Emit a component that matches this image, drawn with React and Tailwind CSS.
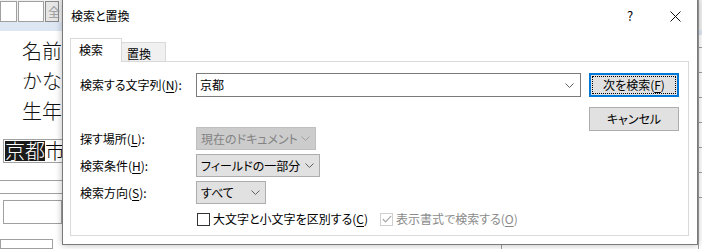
import React from "react";

const font = { fontFamily: '"Noto Sans CJK JP", "Noto Sans", sans-serif' };

function U({ children }) {
  return <span className="underline underline-offset-2">{children}</span>;
}

function Chevron({ color = "#606060" }) {
  return (
    <svg width="9" height="5" viewBox="0 0 9 5" className="shrink-0">
      <polyline points="0.5,0.5 4.5,4.5 8.5,0.5" fill="none" stroke={color} strokeWidth="1" />
    </svg>
  );
}

function Select({ w, text, disabled }) {
  return (
    <div
      className={`flex h-[23px] items-center justify-between whitespace-nowrap border pl-[4px] pr-[5px] ${
        disabled ? "border-[#bfbfbf] bg-[#cccccc] text-[#838383]" : "border-[#adadad] bg-[#e1e1e1] text-black"
      }`}
      style={{ width: w }}
    >
      <span className="leading-none">{text}</span>
      <Chevron color={disabled ? "#a0a0a0" : "#606060"} />
    </div>
  );
}

function Row({ label, children, className = "" }) {
  return (
    <div className={`flex items-center ${className}`}>
      <div className="w-[116px] shrink-0 whitespace-nowrap leading-none">{label}</div>
      {children}
    </div>
  );
}

export default function App() {
  return (
    <div className="relative h-[249px] w-[702px] overflow-hidden bg-white text-[12px] text-black" style={font}>
      {/* background application */}
      <div className="flex h-full w-full">
        <div className="flex w-[62px] shrink-0 flex-col">
          <div className="flex h-[24px] items-start gap-[1px] bg-[#f0f0f0] pt-[1px]">
            <div className="h-[21px] w-[17px] border border-[#a0a0a0] bg-white" />
            <div className="h-[21px] w-[26px] border border-[#a0a0a0] bg-white" />
            <div className="flex h-[21px] w-[14px] items-center border border-[#8a8a8a] bg-[#e6e6e6] pl-[2px] text-[12px] text-[#9a9a9a]">全</div>
          </div>
          <div className="h-[11px] bg-[#dde7f4]" />
          <div className="flex flex-col whitespace-nowrap pl-[22px] text-[20px] font-light leading-[30px] text-[#111]">
            <div className="mt-[5px]">名前</div>
            <div>かな</div>
            <div>生年</div>
          </div>
          <div className="ml-[3px] mt-[13px] flex h-[24px] w-[120px] shrink-0 items-center whitespace-nowrap border border-[#a0a0a0] pl-[1px] text-[20px] font-light leading-none">
            <span className="bg-[#1a1a1a] text-white">京都</span>
            <span>市</span>
          </div>
          <div className="mt-[17px] h-px shrink-0 bg-[#a0a0a0]" />
          <div className="mt-[12px] h-px shrink-0 bg-[#a0a0a0]" />
          <div className="ml-[3px] mt-[6px] h-[24px] shrink-0 border border-[#a0a0a0]" />
          <div className="mt-[15px] h-[10px] w-[53px] shrink-0 border border-[#a0a0a0]" />
        </div>
        <div className="flex flex-1 flex-col justify-end">
          <div className="flex h-[4px]">
            <div className="w-[440px] border-r border-[#a0a0a0]" />
          </div>
        </div>
        <div className="flex w-[4px] shrink-0 flex-col border-l border-[#a0a0a0]">
          <div className="h-[30px] bg-[#f0f0f0]" />
          <div className="h-[5px] bg-[#dde7f4]" />
          <div className="mt-[12px] h-px bg-[#a0a0a0]" />
          <div className="mt-[24px] h-px bg-[#a0a0a0]" />
          <div className="mt-[24px] h-px bg-[#a0a0a0]" />
          <div className="mt-[24px] h-px bg-[#a0a0a0]" />
          <div className="mt-[24px] h-px bg-[#a0a0a0]" />
          <div className="mt-[24px] h-px bg-[#a0a0a0]" />
          <div className="mt-[24px] h-px bg-[#a0a0a0]" />
        </div>
      </div>

      {/* dialog */}
      <div className="absolute left-[62px] top-[-1px] flex h-[246px] w-[636px] flex-col border border-[#7a7a7a] bg-white shadow-[0_0_7px_rgba(0,0,0,0.28)] [font-feature-settings:'palt']">
        <div className="flex h-[32px] items-center pl-[8px]">
          <span className="leading-none">検索と置換</span>
          <div className="ml-auto flex h-full w-[46px] items-center justify-center text-[13px]">?</div>
          <div className="flex h-full w-[44px] items-center justify-center">
            <svg width="11" height="11" viewBox="0 0 11 11">
              <path d="M0.5 0.5 L10.5 10.5 M10.5 0.5 L0.5 10.5" stroke="#111" strokeWidth="1" fill="none" />
            </svg>
          </div>
        </div>
        <div className="mt-[6px] flex items-end pl-[7px]">
          <div className="relative z-10 -mb-px flex h-[24px] w-[52px] items-start border border-b-0 border-[#d9d9d9] bg-white pl-[8px] pt-[5px] leading-none">
            検索
          </div>
          <div className="-mb-px flex h-[20px] w-[44px] items-start border border-l-0 border-[#d9d9d9] bg-[#f0f0f0] pl-[5px] pt-[5px] leading-none">
            置換
          </div>
        </div>
        <div className="ml-[7px] flex h-[175px] w-[619px] border border-[#d9d9d9] bg-white pl-[9px] pt-[11px]">
          <div className="flex w-[501px] flex-col">
            <Row label={<>検索する文字列(<U>N</U>):</>}>
              <div className="flex h-[24px] w-[385px] items-center justify-between border border-[#7a7a7a] bg-white pl-[3px] pr-[6px]">
                <span className="leading-none">京都</span>
                <Chevron />
              </div>
            </Row>
            <Row className="mt-[30px]" label={<>探す場所(<U>L</U>):</>}>
              <Select w={120} text="現在のドキュメント" disabled />
            </Row>
            <Row className="mt-[4px]" label={<>検索条件(<U>H</U>):</>}>
              <Select w={124} text="フィールドの一部分" />
            </Row>
            <Row className="mt-[4px]" label={<>検索方向(<U>S</U>):</>}>
              <Select w={70} text="すべて" />
            </Row>
            <div className="mt-[5px] flex h-[20px] items-center whitespace-nowrap pl-[117px]">
              <div className="h-[13px] w-[13px] shrink-0 border border-[#333] bg-white" />
              <span className="ml-[3px] leading-none">
                大文字と小文字を区別する(<U>C</U>)
              </span>
              <div className="ml-[12px] flex h-[13px] w-[13px] shrink-0 items-center justify-center border border-[#cfcfcf] bg-white">
                <svg width="10" height="8" viewBox="0 0 10 8">
                  <polyline points="0.8,4 3.6,6.8 9.2,0.8" fill="none" stroke="#a8a8a8" strokeWidth="1.2" />
                </svg>
              </div>
              <span className="ml-[3px] leading-none text-[#8a8a8a]">
                表示書式で検索する(<U>O</U>)
              </span>
            </div>
          </div>
          <div className="ml-[8px] flex flex-col">
            <div className="flex h-[24px] w-[90px] items-center justify-center border-2 border-[#0078d7] bg-[#e1e1e1] p-[1px]">
              <div className="flex h-full w-full items-center justify-center whitespace-nowrap border border-dotted border-black leading-none">
                次を検索(<U>F</U>)
              </div>
            </div>
            <div className="mt-[10px] flex h-[24px] w-[90px] items-center justify-center whitespace-nowrap border border-[#adadad] bg-[#e1e1e1] leading-none">
              キャンセル
            </div>
          </div>
        </div>
      </div>
    </div>
  );
}
